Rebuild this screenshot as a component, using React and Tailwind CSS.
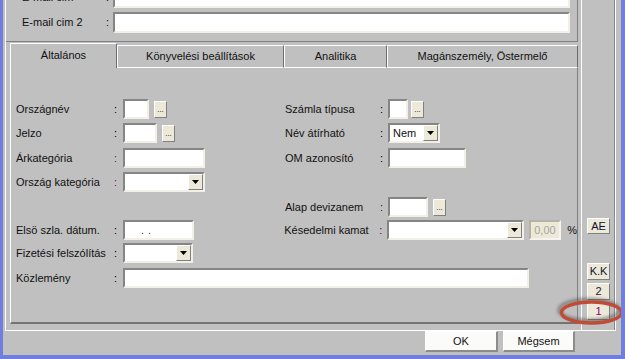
import React from 'react';

const sunken =
  'bg-white border-2 border-t-[#858585] border-l-[#858585] border-r-[#f1efe6] border-b-[#f1efe6]';
const raised =
  'bg-[#ece9d8] border border-t-white border-l-white border-r-[#808080] border-b-[#808080]';

function DotsBtn({ className = '' }) {
  return (
    <div className={`${raised} w-[13px] h-[17px] mt-[2px] flex items-center justify-center text-[8px] leading-none ${className}`}>
      ...
    </div>
  );
}

function Drop({ className = '' }) {
  return (
    <div className={`${raised} w-[15px] h-[16px] flex items-center justify-center ${className}`}>
      <svg width="7" height="4" viewBox="0 0 7 4">
        <path d="M0 0h7L3.5 4z" fill="#000" />
      </svg>
    </div>
  );
}

function Label({ text, colon = 'text-black', wide }) {
  return (
    <>
      <span className={`${wide ? 'w-[97px]' : 'w-[95px]'} h-[20px] flex items-center whitespace-nowrap`}>{text}</span>
      <span className={`${wide ? 'w-[10px] pl-[1px]' : 'w-[8px]'} h-[20px] flex items-center ${colon}`}>:</span>
    </>
  );
}

function TabBtn({ label, active, className }) {
  return (
    <div
      className={`${className} flex items-center justify-center border-t border-l border-white border-r border-r-[#6c6c6c] ${
        active ? 'h-[25px]' : 'h-[23px] border-b'
      }`}
    >
      {label}
    </div>
  );
}

export default function App() {
  return (
    <div className="relative w-[625px] h-[359px] bg-[#c0c0c0] border-l-[3px] border-r-[4px] border-b-[4px] border-[#6e7fe0] flex flex-col overflow-hidden text-[11px] text-[#111] font-['Liberation_Sans',Arial,sans-serif]">
      {/* main frame */}
      <div className="ml-[2px] w-[611px] h-[331px] border-l border-b border-white flex">
        <div className="w-[575px] flex flex-col">
          {/* e-mail rows */}
          <div className="w-[572px] h-[42px] border-r border-b border-[#808080] overflow-hidden">
            <div className="-mt-[13px] flex flex-col gap-[4px] pl-[16px]">
              <div className="flex h-[21px]">
                <span className="w-[84px] flex items-center">E-mail cim</span>
                <span className="w-[7px] flex items-center">:</span>
                <div className={`${sunken} w-[457px] h-[21px]`} />
              </div>
              <div className="flex h-[21px]">
                <span className="w-[84px] flex items-center">E-mail cim 2</span>
                <span className="w-[7px] flex items-center">:</span>
                <div className={`${sunken} w-[457px] h-[21px]`} />
              </div>
            </div>
          </div>

          {/* tab control */}
          <div className="ml-[4px] mt-[1px] w-[568px] flex flex-col">
            <div className="h-[25px] flex items-end">
              <TabBtn active label="Általános" className="w-[107px] pb-[2px]" />
              <TabBtn label="Könyvelési beállítások" className="w-[167px]" />
              <TabBtn label="Analitika" className="w-[103px]" />
              <TabBtn label="Magánszemély, Östermelő" className="w-[191px]" />
            </div>
            <div className="h-[256px] border-l border-white border-r border-r-[#808080] border-b-2 border-b-[#747474] pt-[31px] pl-[5px] flex flex-col">
              <div className="flex h-[24px]">
                <div className="w-[269px] flex">
                  <Label wide text="Országnév" />
                  <div className={`${sunken} w-[26px] h-[20px]`} />
                  <DotsBtn className="ml-[5px]" />
                </div>
                <div className="flex">
                  <Label text="Számla típusa" />
                  <div className={`${sunken} w-[20px] h-[20px]`} />
                  <DotsBtn className="ml-[3px]" />
                </div>
              </div>
              <div className="flex h-[25px]">
                <div className="w-[269px] flex">
                  <Label wide text="Jelzo" />
                  <div className={`${sunken} w-[34px] h-[20px]`} />
                  <DotsBtn className="ml-[5px]" />
                </div>
                <div className="flex">
                  <Label text="Név átírható" />
                  <div className={`${sunken} w-[52px] h-[20px] flex items-center justify-between pl-[3px]`}>
                    <span>Nem</span>
                    <Drop />
                  </div>
                </div>
              </div>
              <div className="flex h-[24px]">
                <div className="w-[269px] flex">
                  <Label wide text="Árkategória" colon="text-[#800080]" />
                  <div className={`${sunken} w-[82px] h-[20px]`} />
                </div>
                <div className="flex">
                  <Label text="OM azonosító" />
                  <div className={`${sunken} w-[78px] h-[20px]`} />
                </div>
              </div>
              <div className="flex h-[25px]">
                <div className="w-[269px] flex">
                  <Label wide text="Ország kategória" colon="text-[#800080]" />
                  <div className={`${sunken} w-[82px] h-[20px] flex justify-end`}>
                    <Drop />
                  </div>
                </div>
              </div>
              <div className="flex h-[23px]">
                <div className="w-[269px]" />
                <div className="flex">
                  <Label text="Alap devizanem" colon="text-[#4b0050]" />
                  <div className={`${sunken} w-[40px] h-[20px]`} />
                  <DotsBtn className="ml-[5px]" />
                </div>
              </div>
              <div className="flex h-[23px]">
                <div className="w-[269px] flex">
                  <Label wide text="Elsö szla. dátum." />
                  <div className={`${sunken} w-[71px] h-[20px] flex items-center pl-[16px] text-[#800080] tracking-[4px]`}>
                    ..
                  </div>
                </div>
                <div className="flex">
                  <Label text="Késedelmi kamat" colon="text-[#4b0050]" />
                  <div className={`${sunken} w-[137px] h-[20px] flex justify-end`}>
                    <Drop />
                  </div>
                  <div className="ml-[5px] w-[32px] h-[20px] bg-[#ece9d8] border-2 border-t-[#b5b2a6] border-l-[#b5b2a6] border-r-[#f6f4ee] border-b-[#f6f4ee] flex items-center pl-[3px] text-[#a7a59c]">
                    0,00
                  </div>
                  <span className="ml-[6px] h-[20px] flex items-center">%</span>
                </div>
              </div>
              <div className="flex h-[25px]">
                <div className="w-[269px] flex">
                  <Label wide text="Fizetési felszólítás" />
                  <div className={`${sunken} w-[70px] h-[20px] flex justify-end`}>
                    <Drop />
                  </div>
                </div>
              </div>
              <div className="flex h-[20px]">
                <Label wide text="Közlemény" />
                <div className={`${sunken} w-[406px] h-[20px]`} />
              </div>
            </div>
          </div>
        </div>

        {/* right button column */}
        <div className="w-[35px] border-l border-white border-r border-r-white shadow-[inset_-1px_0_0_#8a8a8a] pl-[5px] pt-[218px] flex flex-col">
          <div className={`${raised} w-[23px] h-[16px] flex items-center justify-center text-[#101030]`}>AE</div>
          <div className={`${raised} w-[23px] h-[17px] mt-[29px] flex items-center justify-center text-[#101030]`}>K.K</div>
          <div className={`${raised} w-[23px] h-[17px] mt-[3px] flex items-center justify-center text-[#2a1040]`}>2</div>
          <div className={`${raised} w-[23px] h-[17px] mt-[3px] flex items-center justify-center text-[#800080]`}>1</div>
        </div>
      </div>

      {/* bottom buttons */}
      <div className="flex justify-end gap-[5px] pr-[46px]">
        <div className="w-[73px] h-[21px] bg-[#fbfbf9] border border-t-white border-l-white border-r-2 border-b-2 border-r-[#8c8c8c] border-b-[#8c8c8c] flex items-center justify-center">
          OK
        </div>
        <div className="w-[72px] h-[21px] bg-[#fbfbf9] border border-t-white border-l-white border-r-2 border-b-2 border-r-[#8c8c8c] border-b-[#8c8c8c] flex items-center justify-center">
          Mégsem
        </div>
      </div>

      {/* red highlight ring */}
      <svg className="absolute left-[552px] top-[295px]" width="72" height="34" viewBox="0 0 72 34">
        <defs>
          <filter id="blur" x="-20%" y="-40%" width="140%" height="180%">
            <feGaussianBlur stdDeviation="1.8" />
          </filter>
        </defs>
        <ellipse cx="34" cy="15" rx="30" ry="10.5" fill="none" stroke="#444" strokeWidth="3.5" opacity="0.5" filter="url(#blur)" />
        <ellipse cx="36.5" cy="17.5" rx="30" ry="10.5" fill="none" stroke="#c04c36" strokeWidth="3.5" />
      </svg>
    </div>
  );
}
